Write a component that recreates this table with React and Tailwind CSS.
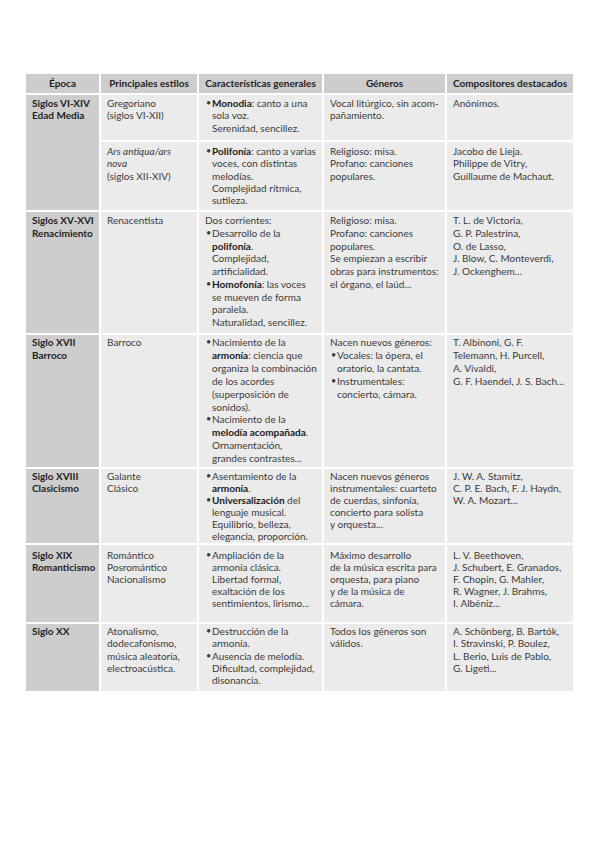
import React from "react";

const B = ({ children }) => <b className="font-bold text-[#1a1a1a]">{children}</b>;

const Lines = ({ lines }) => (
  <>
    {lines.map((l, i) => (
      <div key={i}>{l}</div>
    ))}
  </>
);

const Bullets = ({ items }) => (
  <div className="pl-[1px]">
    {items.map((lines, i) => (
      <div key={i} className="flex">
        <span className="w-[6px] shrink-0 text-[9px]">•</span>
        <div>
          <Lines lines={lines} />
        </div>
      </div>
    ))}
  </div>
);

const head = "bg-[#cdcdcd] font-bold text-[#222] flex items-center justify-center";
const firstBase = "bg-[#cdcdcd] font-bold text-[#222] pl-[6px]";
const cellBase = "bg-[#ebebeb] pl-[6px]";

const R1a = "pt-[2px] leading-[12.4px]";
const R1b = "pt-[3px] leading-[12.3px]";
const R2 = "pt-[2px] leading-[12.75px]";
const R3 = "pt-[1px] leading-[12.9px]";
const R4 = "pt-[1px] leading-[12px]";
const R5 = "pt-[4px] leading-[12px]";
const R6 = "pt-[1px] leading-[12.25px]";

export default function App() {
  return (
    <div className="min-h-[848px] w-[599px] bg-white pt-[74px] pl-[26px]">
      <div
        className="grid w-[547px] gap-[2px] whitespace-nowrap text-[10px] leading-[12.4px] text-[#3a3a3a] grid-cols-[73px_96px_123px_121px_126px] grid-rows-[19px_45px_68px_121px_132px_74px_77px_67px]"
        style={{ fontFamily: "Lato, 'Open Sans', sans-serif" }}
      >
        <div className={head}>Época</div>
        <div className={head}>Principales estilos</div>
        <div className={head}>Características generales</div>
        <div className={head}>Géneros</div>
        <div className={head}>Compositores destacados</div>

        <div className={`${firstBase} ${R1a} row-span-2`}><Lines lines={["Siglos VI-XIV", "Edad Media"]} /></div>
        <div className={`${cellBase} ${R1a}`}><Lines lines={["Gregoriano", "(siglos VI-XII)"]} /></div>
        <div className={`${cellBase} ${R1a}`}>
          <Bullets items={[[<><B>Monodia</B>: canto a una</>, "sola voz.", "Serenidad, sencillez."]]} />
        </div>
        <div className={`${cellBase} ${R1a}`}><Lines lines={["Vocal litúrgico, sin acom-", "pañamiento."]} /></div>
        <div className={`${cellBase} ${R1a}`}>Anónimos.</div>

        <div className={`${cellBase} ${R1b}`}><Lines lines={[<i>Ars antiqua/ars</i>, <i>nova</i>, "(siglos XII-XIV)"]} /></div>
        <div className={`${cellBase} ${R1b}`}>
          <Bullets items={[[<><B>Polifonía</B>: canto a varias</>, "voces, con distintas", "melodías.", "Complejidad rítmica,", "sutileza."]]} />
        </div>
        <div className={`${cellBase} ${R1b}`}><Lines lines={["Religioso: misa.", "Profano: canciones", "populares."]} /></div>
        <div className={`${cellBase} ${R1b}`}><Lines lines={["Jacobo de Lieja.", "Philippe de Vitry,", "Guillaume de Machaut."]} /></div>

        <div className={`${firstBase} ${R2}`}><Lines lines={["Siglos XV-XVI", "Renacimiento"]} /></div>
        <div className={`${cellBase} ${R2}`}>Renacentista</div>
        <div className={`${cellBase} ${R2}`}>
          <div>Dos corrientes:</div>
          <Bullets
            items={[
              ["Desarrollo de la", <><B>polifonía</B>.</>, "Complejidad,", "artificialidad."],
              [<><B>Homofonía</B>: las voces</>, "se mueven de forma", "paralela.", "Naturalidad, sencillez."],
            ]}
          />
        </div>
        <div className={`${cellBase} ${R2}`}>
          <Lines lines={["Religioso: misa.", "Profano: canciones", "populares.", "Se empiezan a escribir", "obras para instrumentos:", "el órgano, el laúd..."]} />
        </div>
        <div className={`${cellBase} ${R2}`}>
          <Lines lines={["T. L. de Victoria,", "G. P. Palestrina,", "O. de Lasso,", "J. Blow, C. Monteverdi,", "J. Ockenghem..."]} />
        </div>

        <div className={`${firstBase} ${R3}`}><Lines lines={["Siglo XVII", "Barroco"]} /></div>
        <div className={`${cellBase} ${R3}`}>Barroco</div>
        <div className={`${cellBase} ${R3}`}>
          <Bullets
            items={[
              ["Nacimiento de la", <><B>armonía</B>: ciencia que</>, "organiza la combinación", "de los acordes", "(superposición de", "sonidos)."],
              ["Nacimiento de la", <><B>melodía acompañada</B>.</>, "Ornamentación,", "grandes contrastes..."],
            ]}
          />
        </div>
        <div className={`${cellBase} ${R3}`}>
          <div>Nacen nuevos géneros:</div>
          <Bullets items={[["Vocales: la ópera, el", "oratorio, la cantata."], ["Instrumentales:", "concierto, cámara."]]} />
        </div>
        <div className={`${cellBase} ${R3}`}>
          <Lines lines={["T. Albinoni, G. F.", "Telemann, H. Purcell,", "A. Vivaldi,", "G. F. Haendel, J. S. Bach..."]} />
        </div>

        <div className={`${firstBase} ${R4}`}><Lines lines={["Siglo XVIII", "Clasicismo"]} /></div>
        <div className={`${cellBase} ${R4}`}><Lines lines={["Galante", "Clásico"]} /></div>
        <div className={`${cellBase} ${R4}`}>
          <Bullets
            items={[
              ["Asentamiento de la", <><B>armonía</B>.</>],
              [<><B>Universalización</B> del</>, "lenguaje musical.", "Equilibrio, belleza,", "elegancia, proporción."],
            ]}
          />
        </div>
        <div className={`${cellBase} ${R4}`}>
          <Lines lines={["Nacen nuevos géneros", "instrumentales: cuarteto", "de cuerdas, sinfonía,", "concierto para solista", "y orquesta..."]} />
        </div>
        <div className={`${cellBase} ${R4}`}>
          <Lines lines={["J. W. A. Stamitz,", "C. P. E. Bach, F. J. Haydn,", "W. A. Mozart..."]} />
        </div>

        <div className={`${firstBase} ${R5}`}><Lines lines={["Siglo XIX", "Romanticismo"]} /></div>
        <div className={`${cellBase} ${R5}`}><Lines lines={["Romántico", "Posromántico", "Nacionalismo"]} /></div>
        <div className={`${cellBase} ${R5}`}>
          <Bullets items={[["Ampliación de la", "armonía clásica.", "Libertad formal,", "exaltación de los", "sentimientos, lirismo..."]]} />
        </div>
        <div className={`${cellBase} ${R5}`}>
          <Lines lines={["Máximo desarrollo", "de la música escrita para", "orquesta, para piano", "y de la música de", "cámara."]} />
        </div>
        <div className={`${cellBase} ${R5}`}>
          <Lines lines={["L. V. Beethoven,", "J. Schubert, E. Granados,", "F. Chopin, G. Mahler,", "R. Wagner, J. Brahms,", "I. Albéniz..."]} />
        </div>

        <div className={`${firstBase} ${R6}`}>Siglo XX</div>
        <div className={`${cellBase} ${R6}`}>
          <Lines lines={["Atonalismo,", "dodecafonismo,", "música aleatoria,", "electroacústica."]} />
        </div>
        <div className={`${cellBase} ${R6}`}>
          <Bullets items={[["Destrucción de la", "armonía."], ["Ausencia de melodía.", "Dificultad, complejidad,", "disonancia."]]} />
        </div>
        <div className={`${cellBase} ${R6}`}><Lines lines={["Todos los géneros son", "válidos."]} /></div>
        <div className={`${cellBase} ${R6}`}>
          <Lines lines={["A. Schönberg, B. Bartók,", "I. Stravinski, P. Boulez,", "L. Berio, Luis de Pablo,", "G. Ligeti..."]} />
        </div>
      </div>
    </div>
  );
}
